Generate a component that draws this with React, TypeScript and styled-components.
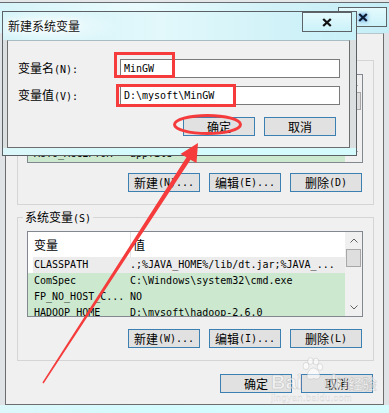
import React from 'react';
import styled, { createGlobalStyle, css } from 'styled-components';

const GlobalStyle = createGlobalStyle`
  html, body {
    margin: 0;
    padding: 0;
    background: #e4e6e8;
  }
  body {
    font-family: "DejaVu Sans Mono", "Noto Sans CJK SC", monospace;
    font-size: 10px;
    color: #000;
  }
  *, *::before, *::after {
    box-sizing: border-box;
  }
`;

const Han = styled.span`
  font-family: "Noto Sans CJK SC", sans-serif;
  font-size: 12px;
`;

// CJK runs get the 12px face, the rest stays in the narrow mono face
const Txt = ({ children }: { children: string }) => (
  <>
    {children.split(/([\u4e00-\u9fff]+)/).map((part, i) =>
      i % 2 ? <Han key={i}>{part}</Han> : part,
    )}
  </>
);

const Screen = styled.div`
  position: relative;
  width: 389px;
  height: 413px;
  overflow: hidden;
  padding-top: 2px;
  background: #e4e6e8;
`;

/* ---------- back window (环境变量) ---------- */

const Window = styled.div`
  display: flex;
  flex-direction: column;
  height: 411px;
  border-top: 1px solid #676c70;
  background: #dfe3e5;
`;

const TitleBar = styled.div`
  display: flex;
  justify-content: flex-end;
  height: 30px;
  padding: 4px 2px 0 0;
  background: linear-gradient(90deg, #d6f4f9 0%, #eafbfd 35%, #d2f2f8 70%, #c6eef7 100%);
`;

const CloseBox = styled.div<{ $w: number }>`
  display: flex;
  align-items: center;
  justify-content: center;
  width: ${(p) => p.$w}px;
  height: 20px;
  border: 1px solid #5d6366;
  background: linear-gradient(180deg, #e4fafd, #cbf2f9);
`;

const Client = styled.div`
  flex: 1;
  display: flex;
  flex-direction: column;
  margin: 0 5px;
  padding: 0 9px 0 11px;
  border: 1px solid #6d6d6d;
  border-top-color: #b6c7cd;
  background: #f0f0f0;
`;

const BottomFrame = styled.div<{ $h: number }>`
  height: ${(p) => p.$h}px;
  background: linear-gradient(90deg, #dcf7fa, #d3fbfd 40%, #d6fbfd);
`;

const Group = styled.fieldset<{ $top: number }>`
  margin: ${(p) => p.$top}px 0 0;
  padding: 6px 10px 12px 9px;
  border: 1px solid #d5d5d5;
  min-width: 0;
`;

const GroupCaption = styled.legend`
  margin-left: -4px;
  padding: 0 2px;
  height: 16px;
  line-height: 16px;
`;

const List = styled.div<{ $h: number }>`
  display: flex;
  height: ${(p) => p.$h}px;
  border: 1px solid #828790;
  background: #cce8cf;
`;

const ListBody = styled.div`
  flex: 1;
  min-width: 0;
  overflow: hidden;
`;

const HeadRow = styled.div<{ $h: number }>`
  display: grid;
  grid-template-columns: 102px 1fr;
  height: ${(p) => p.$h}px;
  background: #fff;
`;

const HeadCell = styled.div<{ $sep?: boolean }>`
  display: flex;
  align-items: center;
  padding-left: ${(p) => (p.$sep ? 2 : 6)}px;
  ${(p) =>
    p.$sep &&
    css`
      border-left: 1px solid #e5e5e5;
    `}
`;

const Row = styled.div<{ $selected?: boolean }>`
  display: grid;
  grid-template-columns: 102px 1fr;
  height: 16px;
  line-height: 16px;
  white-space: nowrap;
  ${(p) =>
    p.$selected &&
    css`
      background: linear-gradient(90deg, #fff 5px, #ececec 5px);
    `}
`;

const Cell = styled.div<{ $first?: boolean }>`
  overflow: hidden;
  padding-left: ${(p) => (p.$first ? 6 : 0)}px;
`;

const ScrollBar = styled.div`
  display: flex;
  flex-direction: column;
  align-items: center;
  width: 17px;
  background: #f0f0f0;
`;

const ScrollArrow = styled.div`
  display: flex;
  align-items: center;
  justify-content: center;
  width: 17px;
  height: 17px;
`;

const Thumb = styled.div`
  width: 15px;
  height: 18px;
  border: 1px solid #a7a7a7;
  background: #dedede;
`;

const Spacer = styled.div`
  flex: 1;
`;

const ButtonRow = styled.div<{ $top: number; $right?: number }>`
  display: flex;
  justify-content: flex-end;
  gap: 9px;
  margin-top: ${(p) => p.$top}px;
  padding-right: ${(p) => p.$right ?? 0}px;
`;

const Button = styled.button`
  display: flex;
  align-items: center;
  justify-content: center;
  width: 72px;
  height: 19px;
  margin: 0;
  padding: 0;
  border: 1px solid #3c7fb1;
  background: #e1e1e1;
  color: #000;
  font: inherit;
  line-height: 17px;
  white-space: nowrap;
`;

/* ---------- front dialog (新建系统变量) ---------- */

const Dialog = styled.div`
  position: absolute;
  left: 2px;
  top: 11px;
  width: 355px;
  height: 145px;
  display: flex;
  flex-direction: column;
  border: 1px solid #5b6064;
  background: #dcdfe0;
`;

const DialogTitle = styled.div`
  display: flex;
  align-items: flex-start;
  justify-content: space-between;
  height: 28px;
  padding: 0 4px 0 5px;
  background: radial-gradient(ellipse 70px 18px at 45px 14px, #f4fdfe, rgba(244, 253, 254, 0) 100%),
    linear-gradient(90deg, #d3f3f8 0%, #e2f8fb 45%, #d0f2f8 80%, #c9f1f8 100%);
`;

const TitleText = styled.div`
  align-self: center;
  font-family: "Noto Sans CJK SC", sans-serif;
  font-size: 12px;
  line-height: 16px;
  color: #111;
  text-shadow: 0 0 4px #fff, 0 0 7px #fff;
`;

const DialogClient = styled.div`
  flex: 1;
  margin: 0 6px 0 4px;
  padding-top: 18px;
  border: 1px solid #6d6d6d;
  border-top-color: #a9bcc3;
  background: #f0f0f0;
`;

const Form = styled.div`
  display: grid;
  grid-template-columns: 112px 220px;
  grid-auto-rows: 19px;
  row-gap: 8px;
  align-items: center;
`;

const FieldLabel = styled.label`
  padding-left: 10px;
  line-height: 16px;
  white-space: nowrap;
`;

const Field = styled.input`
  width: 220px;
  height: 19px;
  margin: 0;
  padding: 0 3px;
  border: 1px solid #7a7a7a;
  background: #fff;
  color: #000;
  font: inherit;
  outline: none;
`;

/* ---------- overlays ---------- */

const Marks = styled.svg`
  position: absolute;
  left: 0;
  top: 0;
  width: 389px;
  height: 413px;
  pointer-events: none;
`;

const Watermark = styled.div`
  position: absolute;
  left: 271px;
  top: 357px;
  display: flex;
  flex-direction: column;
  color: rgba(255, 255, 255, 0.55);
  pointer-events: none;
`;

const WmLogo = styled.div`
  display: flex;
  align-items: flex-end;
  font-family: "Liberation Sans", sans-serif;
  font-weight: bold;
  font-size: 20px;
  line-height: 22px;
  -webkit-text-stroke: 0.6px rgba(150, 150, 150, 0.45);
`;

const WmSite = styled.div`
  font-family: "Liberation Sans", sans-serif;
  font-size: 9px;
  line-height: 11px;
  letter-spacing: 0.5px;
  color: rgba(255, 255, 255, 0.5);
  -webkit-text-stroke: 0.3px rgba(150, 150, 150, 0.4);
`;

const CloseGlyph = ({ glow }: { glow?: boolean }) => (
  <svg width="10" height="9" viewBox="0 0 10 9" style={glow ? { filter: 'drop-shadow(0 0 2px #2f78e0)' } : undefined}>
    <path d="M1.2 1 L8.8 8 M8.8 1 L1.2 8" stroke={glow ? '#0d1a33' : '#111'} strokeWidth="2.3" />
  </svg>
);

const Chevron = ({ up }: { up?: boolean }) => (
  <svg width="8" height="5" viewBox="0 0 8 5">
    <path d={up ? 'M0.5 4.5 L4 1 L7.5 4.5' : 'M0.5 0.5 L4 4 L7.5 0.5'} fill="none" stroke="#606060" strokeWidth="1" />
  </svg>
);

const Paw = () => (
  <svg width="24" height="24" viewBox="0 0 24 24" style={{ margin: '0 0 12px -2px' }}>
    <g fill="rgba(255,255,255,0.6)" stroke="rgba(150,150,150,0.45)" strokeWidth="0.6">
      <ellipse cx="6" cy="9" rx="3" ry="3.6" />
      <ellipse cx="10.5" cy="4" rx="2.8" ry="3.4" />
      <ellipse cx="16" cy="4.5" rx="2.8" ry="3.4" />
      <ellipse cx="20" cy="10" rx="2.8" ry="3.4" />
      <path d="M7 20 C7 14 11 11 13.5 11 C16.5 11 20 15 20 19 C20 22 17 22.5 13.5 21.5 C10.5 22.5 7 22.5 7 20 Z" />
    </g>
  </svg>
);

type Var = { name: string; value: string; selected?: boolean };

const userVars: Var[] = [
  { name: 'PATH', value: 'C:\\Users\\admin\\bin' },
  { name: 'TEMP', value: '%USERPROFILE%\\AppData\\Local\\Temp' },
  { name: 'TMP', value: '%USERPROFILE%\\AppData\\Local\\Temp' },
  { name: 'AUTO_ACCEPTOR', value: 'appfile' },
];

const systemVars: Var[] = [
  { name: 'CLASSPATH', value: '.;%JAVA_HOME%/lib/dt.jar;%JAVA_...', selected: true },
  { name: 'ComSpec', value: 'C:\\Windows\\system32\\cmd.exe' },
  { name: 'FP_NO_HOST_C...', value: 'NO' },
  { name: 'HADOOP_HOME', value: 'D:\\mysoft\\hadoop-2.6.0' },
];

function VarList({ rows, height, headHeight = 25 }: { rows: Var[]; height: number; headHeight?: number }) {
  return (
    <List $h={height}>
      <ListBody>
        <HeadRow $h={headHeight}>
          <HeadCell>
            <Txt>变量</Txt>
          </HeadCell>
          <HeadCell $sep>
            <Txt>值</Txt>
          </HeadCell>
        </HeadRow>
        {rows.map((r) => (
          <Row key={r.name} $selected={r.selected}>
            <Cell $first>{r.name}</Cell>
            <Cell>{r.value}</Cell>
          </Row>
        ))}
      </ListBody>
      <ScrollBar>
        <ScrollArrow>
          <Chevron up />
        </ScrollArrow>
        <Thumb />
        <Spacer />
        <ScrollArrow>
          <Chevron />
        </ScrollArrow>
      </ScrollBar>
    </List>
  );
}

export default function App() {
  return (
    <>
      <GlobalStyle />
      <Screen>
        <Window>
          <TitleBar>
            <CloseBox $w={49}>
              <CloseGlyph glow />
            </CloseBox>
          </TitleBar>
          <Client>
            <Group $top={18}>
              <GroupCaption>
                <Txt>用户变量(U)</Txt>
              </GroupCaption>
              <VarList rows={userVars} height={89} headHeight={23} />
              <ButtonRow $top={10} $right={1}>
                <Button><Txt>新建(N)...</Txt></Button>
                <Button><Txt>编辑(E)...</Txt></Button>
                <Button><Txt>删除(D)</Txt></Button>
              </ButtonRow>
            </Group>
            <Group $top={4}>
              <GroupCaption>
                <Txt>系统变量(S)</Txt>
              </GroupCaption>
              <VarList rows={systemVars} height={86} />
              <ButtonRow $top={12} $right={1}>
                <Button><Txt>新建(W)...</Txt></Button>
                <Button><Txt>编辑(I)...</Txt></Button>
                <Button><Txt>删除(L)</Txt></Button>
              </ButtonRow>
            </Group>
            <ButtonRow $top={13} $right={1}>
              <Button><Txt>确定</Txt></Button>
              <Button><Txt>取消</Txt></Button>
            </ButtonRow>
          </Client>
          <BottomFrame $h={8} />
        </Window>

        <Dialog>
          <DialogTitle>
            <TitleText>新建系统变量</TitleText>
            <CloseBox $w={50}>
              <CloseGlyph />
            </CloseBox>
          </DialogTitle>
          <DialogClient>
            <Form>
              <FieldLabel>
                <Txt>变量名(N):</Txt>
              </FieldLabel>
              <Field readOnly value="MinGW" />
              <FieldLabel>
                <Txt>变量值(V):</Txt>
              </FieldLabel>
              <Field readOnly value="D:\mysoft\MinGW" />
            </Form>
            <ButtonRow $top={12} $right={13}>
              <Button><Txt>确定</Txt></Button>
              <Button><Txt>取消</Txt></Button>
            </ButtonRow>
          </DialogClient>
          <BottomFrame $h={7} />
        </Dialog>

        <Marks viewBox="0 0 389 413">
          <g fill="none" stroke="#f53b3b" strokeWidth="3">
            <rect x="115.5" y="53.5" width="58" height="23" />
            <rect x="117.5" y="85.5" width="117" height="20" />
            <ellipse cx="207.5" cy="124.5" rx="33" ry="9" />
          </g>
          <polygon
            fill="#f53b3b"
            points="198,143 196.5,163 190.5,159.8 43.6,383.4 42.4,382.6 186.5,157.2 180.5,154"
          />
        </Marks>

        <Watermark>
          <WmLogo>
            Bai
            <Paw />
            du
            <Han style={{ fontSize: 14, lineHeight: '20px' }}>经验</Han>
          </WmLogo>
          <WmSite>jingyan.baidu.com</WmSite>
        </Watermark>
      </Screen>
    </>
  );
}
